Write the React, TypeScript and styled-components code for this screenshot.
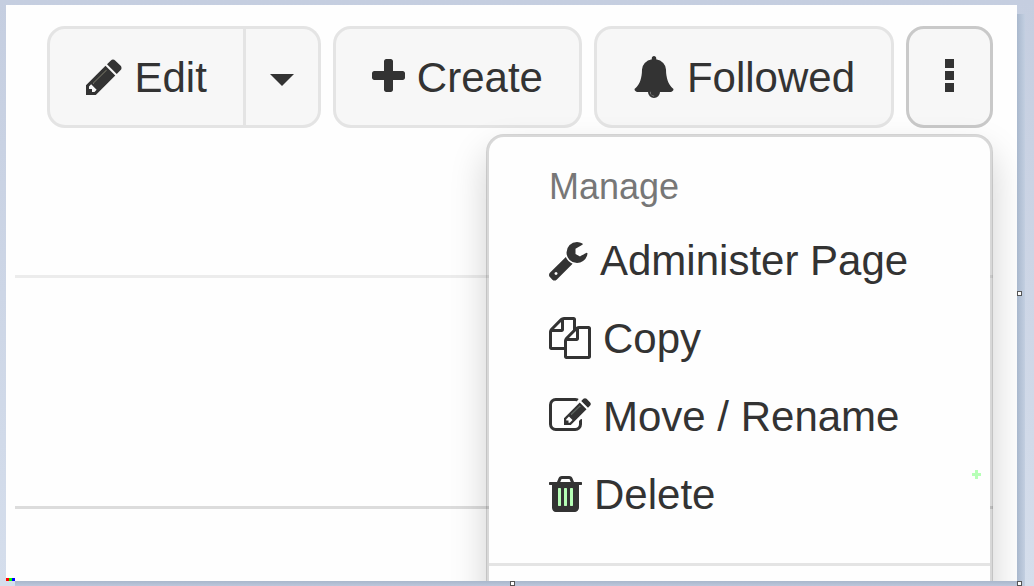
import React from "react";
import styled, { createGlobalStyle } from "styled-components";

const GlobalStyle = createGlobalStyle`
  *, *::before, *::after { box-sizing: border-box; }
  body {
    margin: 0;
    overflow: hidden;
    color: #333;
    font-family: Arial, "Liberation Sans", sans-serif;
    font-size: 42px;
    line-height: 60px;
  }
`;

const Desktop = styled.div`
  position: relative;
  height: 100vh;
  padding: 5px 17px 5px 6px;
  background: linear-gradient(#c5cee0, #d5deec);
`;

const SideShadow = styled.div`
  position: absolute;
  top: 14px;
  right: 9px;
  bottom: 0;
  width: 8px;
  background: linear-gradient(to right, #a9b8cd, #c3cfe1);
`;

const BottomShadow = styled.div`
  position: absolute;
  left: 15px;
  right: 17px;
  bottom: 0;
  height: 5px;
  background: linear-gradient(#a9b7cb, #bcc7dc);
`;

const Page = styled.main`
  position: relative;
  z-index: 0;
  height: 100%;
  padding: 21px 24px 0 9px;
  overflow: hidden;
  background: #fefefe;
`;

const Toolbar = styled.header`
  position: relative;
  display: flex;
  justify-content: flex-end;
  gap: 12px;
`;

const ButtonGroup = styled.div`
  display: flex;
`;

const Button = styled.button<{ $side?: "left" | "right"; $active?: boolean }>`
  display: flex;
  align-items: center;
  gap: 12px;
  height: 102px;
  padding: 0 36px;
  border: 3px solid ${(p) => (p.$active ? "#c9c9c9" : "#e4e4e4")};
  border-left-width: ${(p) => (p.$side === "right" ? "0" : "3px")};
  border-radius: ${(p) =>
    p.$side === "left" ? "18px 0 0 18px" : p.$side === "right" ? "0 18px 18px 0" : "18px"};
  background: #f7f7f7;
  color: inherit;
  font: inherit;
  white-space: nowrap;
`;

const CaretButton = styled(Button)`
  padding: 6px 24px 0;
`;

const Label = styled.span`
  padding-top: 2px;
  line-height: 58px;
`;

const Menu = styled.div`
  position: absolute;
  z-index: 1;
  top: 108px;
  right: 0;
  width: 507px;
  padding: 15px 0;
  border: 3px solid rgba(0, 0, 0, 0.15);
  border-radius: 18px;
  background: #fefefe;
  background-clip: padding-box;
  box-shadow: 0 18px 36px rgba(0, 0, 0, 0.175);
`;

const MenuHeading = styled.h2`
  margin: 0;
  padding: 9px 60px;
  color: #777;
  font-size: 36px;
  font-weight: 400;
  line-height: 51px;
`;

const MenuList = styled.ul`
  margin: 0;
  padding: 0;
  list-style: none;
`;

const MenuLink = styled.a`
  display: flex;
  align-items: center;
  gap: 12px;
  padding: 9px 60px;
  color: inherit;
  text-decoration: none;
  white-space: nowrap;
`;

const MenuDivider = styled.hr`
  height: 3px;
  margin: 30px 0;
  border: 0;
  background: #e4e4e4;
`;

const Section = styled.section<{ $height: number; $line: string }>`
  height: ${(p) => p.$height}px;
  border-bottom: 3px solid ${(p) => p.$line};
`;

const Glyph = styled.svg`
  flex: none;
  height: 42px;
  fill: currentColor;
`;

const Handle = styled.span<{ $spot: "side" | "corner" | "bottom" }>`
  position: absolute;
  width: 5px;
  height: 5px;
  border: 1px solid #555;
  background: #fff;
  ${(p) =>
    p.$spot === "bottom"
      ? "left: 510px; bottom: 0;"
      : p.$spot === "corner"
        ? "right: 12px; bottom: 0;"
        : "right: 12px; top: calc(50% - 2px);"}
`;

const Marker = styled.svg`
  position: absolute;
  right: 53px;
  bottom: 107px;
`;

const Pixels = styled.svg`
  position: absolute;
  left: 6px;
  bottom: 5px;
`;

type GlyphData = {
  x: number;
  w: number;
  px: number;
  d: string;
  under?: { d: string; fill: string };
};

const bar = "q0-14-9-23t-23-9h-64q-14 0-23 9t-9 23v704q0 14 9 23t23 9h64q14 0 23-9t9-23z";

/* Each glyph keeps its own advance width on a 1792-unit em. */
const glyphs = {
  pencil: { x: 128, w: 1536, px: 36, under: { d: "M400 1120L980 540L1080 640L500 1220z", fill: "#66665a" }, d: "M491 1536l91-91-235-235-91 91v107h128v128h107zm523-928q0-22-22-22-10 0-17 7l-542 542q-7 7-7 17 0 22 22 22 10 0 17-7l542-542q7-7 7-17zm-54-192l416 416-832 832h-416v-416zm683 96q0 53-37 90l-166 166-416-416 166-165q36-38 90-38 53 0 91 38l235 234q37 39 37 91z" },
  plus: { x: 192, w: 1408, px: 33, d: "M1600 736v192q0 40-28 68t-68 28h-416v416q0 40-28 68t-68 28h-192q-40 0-68-28t-28-68v-416h-416q-40 0-68-28t-28-68v-192q0-40 28-68t68-28h416v-416q0-40 28-68t68-28h192q40 0 68 28t28 68v416h416q40 0 68 28t28 68z" },
  bell: { x: 0, w: 1792, px: 42, under: { d: "M740 1520h310v180h-310z", fill: "#555" }, d: "M912 1696q0-16-16-16-59 0-101.500-42.500t-42.500-101.500q0-16-16-16t-16 16q0 73 51.500 124.500t124.500 51.500q16 0 16-16zm816-288q0 52-38 90t-90 38h-448q0 106-75 181t-181 75-181-75-75-181h-448q-52 0-90-38t-38-90q50-42 91-88t85-119.500 74.500-158.500 50-206 19.500-260q0-152 117-282.500t307-158.500q-8-19-8-39 0-40 28-68t68-28 68 28 28 68q0 20-8 39 190 28 307 158.500t117 282.500q0 139 19.500 260t50 206 74.500 158.500 85 119.500 91 88z" },
  dots: { x: 704, w: 384, px: 9, d: "M704 128h384v384h-384zM704 640h384v384h-384zM704 1152h384v384h-384z" },
  wrench: { x: 85, w: 1664, px: 39, d: "M448 1472q0-26-19-45t-45-19-45 19-19 45 19 45 45 19 45-19 19-45zm644-420l-682 682q-37 37-90 37-52 0-91-37l-106-108q-38-36-38-90 0-53 38-91l681-681q39 98 114.500 173.500t173.500 114.500zm634-435q0 39-23 106-47 134-164.500 217.500t-258.500 83.500q-185 0-316.500-131.500t-131.500-316.500 131.500-316.500 316.500-131.500q58 0 121.500 16.500t107.500 46.500q16 11 16 28t-16 28l-293 169v224l193 107q5-3 79-48.500t135.500-81 70.500-35.500q15 0 23.500 10t8.500 25z" },
  copy: { x: 0, w: 1792, px: 42, d: "M1696 384q40 0 68 28t28 68v1216q0 40-28 68t-68 28h-960q-40 0-68-28t-28-68v-288h-544q-40 0-68-28t-28-68v-672q0-40 20-88t48-76l408-408q28-28 76-48t88-20h416q40 0 68 28t28 68v328q68-40 128-40h416zm-544 213l-299 299h299v-299zm-640-384l-299 299h299v-299zm196 647l316-316v-416h-384v416q0 40-28 68t-68 28h-416v640h512v-256q0-40 20-88t48-76zm956 804v-1152h-384v416q0 40-28 68t-68 28h-416v640h896z" },
  edit: { x: 0, w: 1792, px: 42, under: { d: "M920 820L1290 450L1350 510L980 880z", fill: "#5c6660" }, d: "M888 1184l116-116-152-152-116 116v56h96v96h56zm440-720q-16-16-33 1l-350 350q-17 17-1 33t33-1l350-350q17-17 1-33zm80 594v190q0 119-84.500 203.500t-203.500 84.500h-832q-119 0-203.500-84.500t-84.500-203.500v-832q0-119 84.500-203.500t203.500-84.500h832q63 0 117 25 15 7 18 23 3 17-9 29l-49 49q-14 14-32 8-23-6-45-6h-832q-66 0-113 47t-47 113v832q0 66 47 113t113 47h832q66 0 113-47t47-113v-126q0-13 9-22l64-64q15-15 35-7t20 29zm-96-738l288 288-672 672h-288v-288zm444 132l-92 92-288-288 92-92q28-28 68-28t68 28l152 152q28 28 28 68t-28 68z" },
  trash: { x: 192, w: 1408, px: 33, under: { d: "M560 620h680v800h-680z", fill: "#b6ffb6" }, d: `M704 1376v-704${bar}M960 1376v-704${bar}M1216 1376v-704${bar}M672 384h448l-48-117q-7-9-17-11h-317q-10 2-17 11zm928 32v64q0 14-9 23t-23 9h-96v948q0 83-47 143.500t-113 60.500h-832q-66 0-113-58.500t-47-141.500v-952h-96q-14 0-23-9t-9-23v-64q0-14 9-23t23-9h309l70-167q15-37 54-63t79-26h320q40 0 79 26t54 63l70 167h309q14 0 23 9t9 23z` },
} satisfies Record<string, GlyphData>;

function Icon({ name }: { name: keyof typeof glyphs }) {
  const g: GlyphData = glyphs[name];
  return (
    <Glyph width={g.px} viewBox={`${g.x} 0 ${g.w} 1792`} aria-hidden="true">
      {g.under && <path d={g.under.d} fill={g.under.fill} />}
      <path fillRule="evenodd" d={g.d} />
    </Glyph>
  );
}

const items: { icon: keyof typeof glyphs; label: string }[] = [
  { icon: "wrench", label: "Administer Page" },
  { icon: "copy", label: "Copy" },
  { icon: "edit", label: "Move / Rename" },
  { icon: "trash", label: "Delete" },
];

export default function App() {
  return (
    <>
      <GlobalStyle />
      <Desktop>
        <SideShadow />
        <BottomShadow />
        <Page>
          <Toolbar>
            <ButtonGroup>
              <Button type="button" $side="left">
                <Icon name="pencil" />
                <Label>Edit</Label>
              </Button>
              <CaretButton type="button" $side="right" aria-label="More edit options">
                <svg width="24" height="12" viewBox="0 0 24 12" aria-hidden="true">
                  <path d="M0 0h24L12 12z" fill="currentColor" />
                </svg>
              </CaretButton>
            </ButtonGroup>
            <Button type="button">
              <Icon name="plus" />
              <Label>Create</Label>
            </Button>
            <Button type="button">
              <Icon name="bell" />
              <Label>Followed</Label>
            </Button>
            <Button type="button" $active aria-label="More actions" aria-expanded="true">
              <Icon name="dots" />
            </Button>
            <Menu>
              <MenuHeading>Manage</MenuHeading>
              <MenuList>
                {items.map((item) => (
                  <li key={item.label}>
                    <MenuLink href="#">
                      <Icon name={item.icon} />
                      <Label>{item.label}</Label>
                    </MenuLink>
                  </li>
                ))}
              </MenuList>
              <MenuDivider />
            </Menu>
          </Toolbar>
          <Section $height={150} $line="#ececec" />
          <Section $height={231} $line="#dcdcdc" />
        </Page>
        <Marker width="9" height="9" viewBox="0 0 9 9" aria-hidden="true">
          <path d="M3 0h3v3h3v3h-3v3h-3v-3h-3v-3h3z" fill="#b6ffb6" />
        </Marker>
        <Pixels width="9" height="3" viewBox="0 0 9 3" aria-hidden="true">
          <path d="M0 0h3v3h-3z" fill="#f00" />
          <path d="M3 0h3v3h-3z" fill="#0f0" />
          <path d="M6 0h3v3h-3z" fill="#00f" />
        </Pixels>
        <Handle $spot="side" />
        <Handle $spot="bottom" />
        <Handle $spot="corner" />
      </Desktop>
    </>
  );
}
